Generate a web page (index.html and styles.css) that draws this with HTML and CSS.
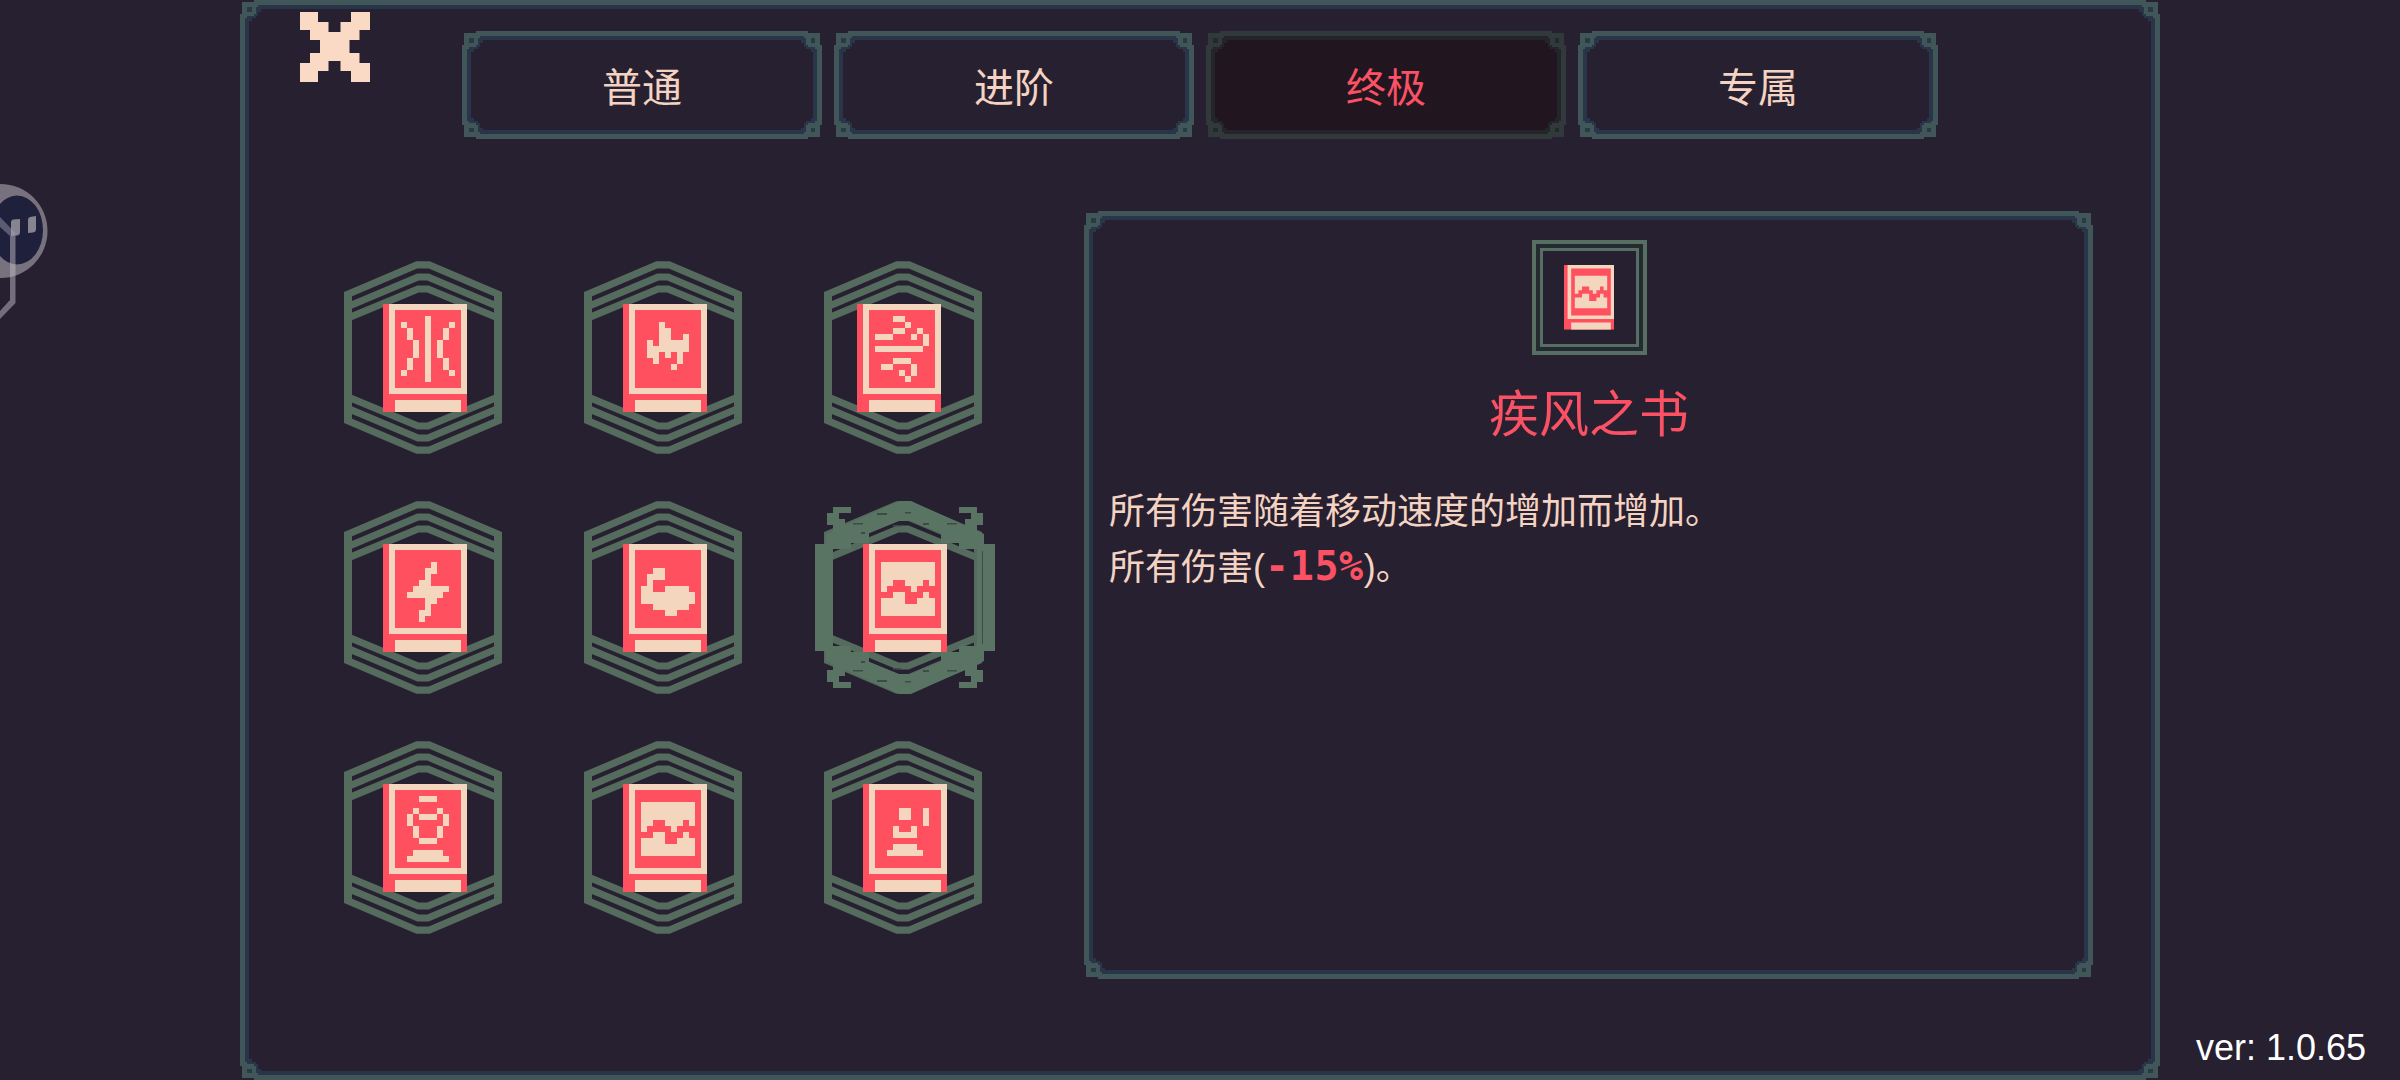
FILE: index.html
```html
<!DOCTYPE html>
<html lang="zh-CN">
<head>
  <meta charset="UTF-8" />
  <meta name="viewport" content="width=device-width, initial-scale=1.0" />
  <title>终极</title>
  <link rel="stylesheet" href="styles.css">
</head>
<body>

  <!-- shared sprites -->
  <svg class="sprites" width="0" height="0" xmlns="http://www.w3.org/2000/svg">
    <symbol id="hex" viewBox="0 0 158 193">
      <g fill="none" stroke="currentColor" stroke-width="7.2">
        <path stroke-width="8" d="M4 31V162M154 31V162"/>
        <path d="M1 34.500L73 3.800H85L157 34.500M4 45.500L74 16H84L154 45.500M4 57L74 28H84L154 57"/>
        <path d="M1 158.500L73 189.200H85L157 158.500M4 147.500L74 177H84L154 147.500M4 136L74 165H84L154 136"/>
      </g>
    </symbol>

    <symbol id="select" viewBox="0 0 180 193">
      <g fill="currentColor">
        <path d="M0 43H18V150H0zM162 43H180V150H162z"/>
        <path d="M11 33L84 0H96L169 33V46L150 42L96 20H84L30 42L11 50z"/>
        <path d="M11 160L84 193H96L169 160V147L150 151L96 173H84L30 151L11 143z"/>
        <path d="M18 6H36V12H24V18H30V24H42V30H54V42H36V48H12V36H18V24H12V12H18z"/>
        <path d="M162 6H144V12H156V18H150V24H138V30H126V42H144V48H168V36H162V24H168V12H162z"/>
        <path d="M18 187H36V181H24V175H30V169H42V163H54V151H36V145H12V157H18V169H12V181H18z"/>
        <path d="M162 187H144V181H156V175H150V169H138V163H126V151H144V145H168V157H162V169H168V181H162z"/>
      </g>
      <path class="specks" d="M38 22h10v1.500h-10zM62 12h10v2h-10zM90 11h6v1.500h-6zM108 22h6v2h-6zM132 22h10v1.500h-10zM46 31h4v2h-4zM78 24h8v1.500h-8zM38 169h10v1.500h-10zM62 179h10v2h-10zM90 180h6v1.500h-6zM108 169h6v2h-6zM132 169h10v1.500h-10zM46 160h4v2h-4zM78 167h8v1.500h-8zM167 50h1v93h-1z"/>
    </symbol>

    <symbol id="book" viewBox="0 0 14 18">
      <path fill="#ff5060" d="M0 0H14V18H0z"/>
      <path fill="#f4d6bf" fill-rule="evenodd" d="M1 0H14V15H1zM2 1V14H13V1zM2 16H13V18H2z"/>
    </symbol>

    <symbol id="mark-split" viewBox="0 0 14 18">
      <path d="M7 2h1v11h-1zM3 3h1v1h-1zM4 4h1v2h-1zM5 6h1v3h-1zM4 9h1v2h-1zM3 11h1v1h-1zM11 3h1v1h-1zM10 4h1v2h-1zM9 6h1v3h-1zM10 9h1v2h-1zM11 11h1v1h-1z"/>
    </symbol>
    <symbol id="mark-flame" viewBox="0 0 14 18">
      <path d="M6 3H7V4H8V6H10V5H11V8H10V10H9V8H8V9H7V8H6V10H5V9H4V6H5V7H6zM8 10h1v1h-1z"/>
    </symbol>
    <symbol id="mark-wind" viewBox="0 0 14 18">
      <path d="M6 2h2v1h-2zM8 3h1v1h-1zM6 4h2v1h-2zM3 5h3v1h-3zM10 4h1v1h-1zM9 5h1v1h-1zM11 5h1v2h-1zM3 7h8v1h-8zM6 9h3v1h-3zM4 10h2v1h-2zM9 10h1v2h-1zM7 11h1v1h-1zM8 12h1v1h-1z"/>
    </symbol>
    <symbol id="mark-bolt" viewBox="0 0 14 18">
      <path d="M8 3H9V5H8V7H11V8H10V9H9V10H8V12H7V13H6V11H7V9H4V8H5V7H6V6H7V4H8z"/>
    </symbol>
    <symbol id="mark-arm" viewBox="0 0 14 18">
      <path d="M5 4H7V6H5V8H7V7H11V8H12V10H11V11H9V12H7V11H5V10H3V7H4V5H5z"/>
    </symbol>
    <symbol id="mark-wave" viewBox="0 0 14 18">
      <path d="M3 3H12V7H11V6H10V7H9V8H8V7H7V6H5V7H4V8H3z"/>
      <path d="M3 9H5V8H7V10H9V9H10V8H11V9H12V12H3z"/>
    </symbol>
    <symbol id="mark-orb" viewBox="0 0 14 18">
      <path d="M6 2h3v1h-3zM5 4h1v1h-1zM9 4h1v1h-1zM4 5h1v2h-1zM6 5h3v1h-3zM10 5h1v2h-1zM5 7h1v2h-1zM9 7h1v2h-1zM6 9h3v1h-3zM5 11H10V12H11V13H4V12H5z"/>
    </symbol>
    <symbol id="mark-mage" viewBox="0 0 14 18">
      <path d="M6 4h2v2h-2zM10 4h1v3h-1zM5 7H6V8H8V7H9V9H5zM5 10H9V11H10V12H4V11H5z"/>
    </symbol>
  </svg>

  <div class="window">
    <header class="window-header">
      <button class="close" aria-label="关闭">
        <svg width="70" height="70" viewBox="0 0 70 70">
          <path fill="#fbdac5" d="M0 0H18V10H28.500V20H40.500V10H51V0H70V18H59.500V28H49.500V41H59.500V51H70V70H51V59H40.500V49H28.500V59H18V70H0V51H10V41H20V28H10V18H0z"/>
        </svg>
      </button>
      <nav class="tabs">
        <button class="tab">普通</button>
        <button class="tab">进阶</button>
        <button class="tab active">终极</button>
        <button class="tab">专属</button>
      </nav>
    </header>

    <main class="content">
      <div class="books">
        <div class="slot">
          <svg class="hex"><use href="#hex"/></svg>
          <svg class="book"><use href="#book"/><use href="#mark-split"/></svg>
        </div>
        <div class="slot">
          <svg class="hex"><use href="#hex"/></svg>
          <svg class="book"><use href="#book"/><use href="#mark-flame"/></svg>
        </div>
        <div class="slot">
          <svg class="hex"><use href="#hex"/></svg>
          <svg class="book book-left"><use href="#book"/><use href="#mark-wind"/></svg>
        </div>
        <div class="slot">
          <svg class="hex"><use href="#hex"/></svg>
          <svg class="book"><use href="#book"/><use href="#mark-bolt"/></svg>
        </div>
        <div class="slot">
          <svg class="hex"><use href="#hex"/></svg>
          <svg class="book"><use href="#book"/><use href="#mark-arm"/></svg>
        </div>
        <div class="slot selected">
          <svg class="hex"><use href="#hex"/></svg>
          <svg class="select"><use href="#select"/></svg>
          <svg class="book"><use href="#book"/><use href="#mark-wave"/></svg>
        </div>
        <div class="slot">
          <svg class="hex"><use href="#hex"/></svg>
          <svg class="book"><use href="#book"/><use href="#mark-orb"/></svg>
        </div>
        <div class="slot">
          <svg class="hex"><use href="#hex"/></svg>
          <svg class="book"><use href="#book"/><use href="#mark-wave"/></svg>
        </div>
        <div class="slot">
          <svg class="hex"><use href="#hex"/></svg>
          <svg class="book"><use href="#book"/><use href="#mark-mage"/></svg>
        </div>
      </div>

      <section class="detail">
        <div class="detail-icon">
          <div class="detail-icon-inner">
            <svg class="book-small"><use href="#book"/><use href="#mark-wave"/></svg>
          </div>
        </div>
        <h1 class="detail-title">疾风之书</h1>
        <div class="detail-text">
          <p>所有伤害随着移动速度的增加而增加。</p>
          <p>所有伤害<span class="paren">(</span><span class="value">-15%</span><span class="paren">)</span>。</p>
        </div>
      </section>
    </main>
  </div>

  <!-- floating helper, half off the left edge -->
  <svg class="floater" width="60" height="160" viewBox="0 0 60 160">
    <circle cx="0.500" cy="61" r="47" fill="#77727d"/>
    <ellipse cx="17" cy="60" rx="26" ry="34.500" fill="#1e203c"/>
    <path fill="#858490" d="M13 49.500L20 49V62Q20 65 17 65.500L11 66V52Q11 50 13 49.500zM30 47L36 46V59Q36 62 33 62.500L28 63V50Q28 47.500 30 47z"/>
    <path fill="#a5a4b4" fill-opacity=".45" d="M0 47L15.500 63V66H10L0 57z"/>
    <path fill="#c0bcc6" fill-opacity=".5" d="M10 66H15.500V133L0 149V141L10 130z"/>
  </svg>

  <div class="version">ver: 1.0.65</div>

</body>
</html>
```
FILE: styles.css
```css
:root {
  --bg: #272030;
  --cream: #f4d3c2;
  --red: #fa5164;
  --moss: #546b5e;
  --frame: url("data:image/svg+xml,%3Csvg xmlns='http://www.w3.org/2000/svg' width='22' height='22' viewBox='0 0 22 22' shape-rendering='crispEdges'%3E%3Cdefs%3E%3Cg id='c'%3E%3Cpath fill='%23293549' d='M2 2H11V4H9V5H8V7H7V8H5V9H4V11H2z'/%3E%3Cpath fill='%23415658' d='M6 0H11V2H8V3H7V6H6V7H3V8H2V11H0V6H1V1H6z'/%3E%3Cpath fill='%23283b43' d='M3 3h2v2h-2z'/%3E%3C/g%3E%3C/defs%3E%3Cuse href='%23c'/%3E%3Cuse href='%23c' transform='matrix(-1 0 0 1 22 0)'/%3E%3Cuse href='%23c' transform='matrix(1 0 0 -1 0 22)'/%3E%3Cuse href='%23c' transform='matrix(-1 0 0 -1 22 22)'/%3E%3C/svg%3E");
  --frame-active: url("data:image/svg+xml,%3Csvg xmlns='http://www.w3.org/2000/svg' width='22' height='22' viewBox='0 0 22 22' shape-rendering='crispEdges'%3E%3Cdefs%3E%3Cg id='c'%3E%3Cpath fill='%23211620' d='M2 2H11V11H2z'/%3E%3Cpath fill='%2324242b' d='M2 2H11V4H9V5H8V7H7V8H5V9H4V11H2z'/%3E%3Cpath fill='%2332393a' d='M6 0H11V2H8V3H7V6H6V7H3V8H2V11H0V6H1V1H6z'/%3E%3Cpath fill='%23202a2c' d='M3 3h2v2h-2z'/%3E%3C/g%3E%3C/defs%3E%3Cuse href='%23c'/%3E%3Cuse href='%23c' transform='matrix(-1 0 0 1 22 0)'/%3E%3Cuse href='%23c' transform='matrix(1 0 0 -1 0 22)'/%3E%3Cuse href='%23c' transform='matrix(-1 0 0 -1 22 22)'/%3E%3C/svg%3E");
}

* {
  box-sizing: border-box;
}

body {
  margin: 0;
  height: 1080px;
  overflow: hidden;
  background: var(--bg);
  color: var(--cream);
  font-family: "Noto Sans CJK SC", sans-serif;
}

button {
  padding: 0;
  border: 0;
  background: none;
  color: inherit;
  font: inherit;
  cursor: pointer;
}

.sprites {
  position: absolute;
}

/* Pixel frames */
.window,
.tab,
.detail {
  border: 10px solid transparent;
  border-image: var(--frame) 10 / 23.33px stretch;
}

.window {
  width: 1920px;
  height: 1080px;
  margin: 0 auto;
}

/* Header */
.window-header {
  display: flex;
  align-items: flex-start;
  padding: 2px 0 0 50px;
}

.close {
  width: 70px;
  height: 70px;
}

.close svg {
  display: block;
}

.tabs {
  display: flex;
  gap: 12px;
  margin: 19px 0 0 92px;
}

.tab {
  width: 360px;
  height: 108px;
  font-size: 40px;
  line-height: 60px;
}

.tab.active {
  border-image: var(--frame-active) 10 fill / 23.33px stretch;
  color: var(--red);
}

/* Content */
.content {
  display: flex;
  align-items: flex-start;
  gap: 61px;
  padding: 72px 0 0 53px;
}

.books {
  display: grid;
  grid-template-columns: repeat(3, 240px);
  grid-auto-rows: 240px;
  margin-top: 26.5px;
}

.slot {
  display: grid;
  place-items: center;
}

.slot > svg {
  grid-area: 1 / 1;
}

.hex {
  width: 158px;
  height: 193px;
  color: var(--moss);
}

.select {
  width: 180px;
  height: 193px;
  margin-left: 3px;
  color: #5a7463;
}

.specks {
  fill: #3c4b48;
}

.book {
  width: 84px;
  height: 108px;
  margin-left: 4px;
  fill: #f4d6bf;
  shape-rendering: crispEdges;
}

.book-left {
  margin-left: -8px;
}

/* Detail panel */
.detail {
  display: flex;
  flex-direction: column;
  align-items: center;
  width: 1009px;
  height: 768px;
  padding: 19px 15px 0;
}

.detail-icon {
  width: 115px;
  height: 115px;
  margin-left: 1px;
  padding: 4px;
  border: 4px solid #576e62;
  background: #242a2f;
}

.detail-icon-inner {
  display: flex;
  align-items: center;
  justify-content: center;
  height: 100%;
  border: 3px solid #576e62;
  background: var(--bg);
}

.book-small {
  width: 50.4px;
  height: 64.8px;
  fill: #f4d6bf;
}

.detail-title {
  margin: 25px 0 0 1px;
  color: var(--red);
  font-size: 50px;
  font-weight: 400;
  line-height: 60px;
}

.detail-text {
  align-self: stretch;
  margin-top: 40px;
  font-size: 36px;
  line-height: 56px;
}

.detail-text p {
  margin: 0;
  height: 56px;
}

.value {
  color: var(--red);
  font-family: "DejaVu Sans Mono", monospace;
  font-size: 40px;
  font-weight: 700;
  letter-spacing: 0.6px;
  line-height: 1;
}

.paren {
  font-family: "Liberation Sans", sans-serif;
  line-height: 1;
}

/* Overlays */
.floater {
  position: absolute;
  left: 0;
  top: 170px;
}

.version {
  position: absolute;
  right: 34px;
  bottom: 12px;
  color: #fff;
  font-family: "Liberation Sans", sans-serif;
  font-size: 36px;
  line-height: 40px;
}
```
